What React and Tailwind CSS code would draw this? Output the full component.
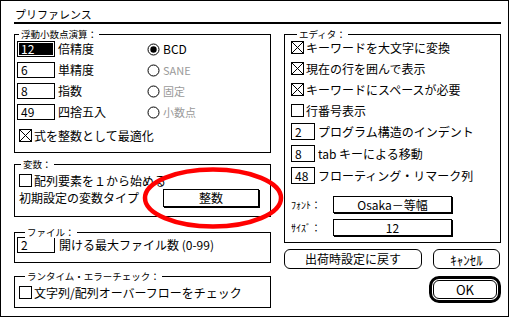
import React from "react";

const Check = ({ on }) => (
  <svg width="13" height="13" viewBox="0 0 13 13" className="block shrink-0">
    <rect x="0.5" y="0.5" width="12" height="12" fill="#fff" stroke="#000" shapeRendering="crispEdges" />
    {on && <path d="M1 1L12 12M12 1L1 12" stroke="#000" strokeWidth="1" />}
  </svg>
);

const Radio = ({ on }) => (
  <svg width="13" height="13" viewBox="0 0 13 13" className="block shrink-0">
    <circle cx="6.5" cy="6.5" r="5.5" fill="#fff" stroke="#000" />
    {on && <circle cx="6.5" cy="6.5" r="3.2" fill="#000" />}
  </svg>
);

const Group = ({ label, labelLeft, className, children }) => (
  <div className={`relative border border-black ${className}`}>
    <span className={`absolute top-[-6px] ${labelLeft} bg-white px-[2px] text-[9.5px] leading-[11px] whitespace-nowrap`}>
      {label}
    </span>
    {children}
  </div>
);

const Field = ({ children, wide = true }) => (
  <div
    className={`${wide ? "w-[38px] h-[16px]" : "w-[24px] h-[17px]"} border border-black flex items-center pl-[3px] text-[12px] leading-none shrink-0`}
  >
    {children}
  </div>
);

const leftRows = [
  { n: "6", label: "単精度", opt: "SANE", on: false, dim: true },
  { n: "8", label: "指数", opt: "固定", on: false, dim: true },
  { n: "49", label: "四捨五入", opt: "小数点", on: false, dim: true },
];

const checks = [
  { on: true, t: "キーワードを大文字に変換" },
  { on: true, t: "現在の行を囲んで表示" },
  { on: true, t: "キーワードにスペースが必要" },
  { on: false, t: "行番号表示" },
];

const fields = [
  { n: "2", t: "プログラム構造のインデント" },
  { n: "8", t: "tab キーによる移動" },
  { n: "48", t: "フローティング・リマーク列" },
];

export default function App() {
  return (
    <div className="w-[509px] h-[317px] border border-black bg-white relative overflow-hidden text-black leading-none font-['Noto_Sans_CJK_JP','Noto_Sans',sans-serif]">
      <div className="pl-[13px] pr-[7px] pt-[6px]">
        <div className="h-[14px] pl-[1px] text-[11px] leading-[14px]">プリファレンス</div>
        <div className="h-[2px] bg-black mt-[1px]" />
        <div className="flex gap-[13px] mt-[10px]">
          {/* left column */}
          <div className="w-[257px] flex flex-col">
            <Group label="浮動小数点演算：" labelLeft="left-[4px]" className="h-[119px] pt-[6px] pl-[2px]">
              <div className="flex flex-col gap-[5px]">
                <div className="flex items-center h-[16px]">
                  <div className="w-[38px] h-[16px] border border-black p-[1px] shrink-0">
                    <div className="h-full bg-black text-white text-[12px] leading-[12px] pl-[2px]">12</div>
                  </div>
                  <span className="ml-[3px] w-[89px] text-[12px]">倍精度</span>
                  <Radio on />
                  <span className="ml-[3px] text-[12px]">BCD</span>
                </div>
                {leftRows.map((r) => (
                  <div key={r.n} className="flex items-center h-[16px]">
                    <Field>{r.n}</Field>
                    <span className="ml-[3px] w-[89px] text-[12px]">{r.label}</span>
                    <Radio on={r.on} />
                    <span className="ml-[3px] text-[11px] text-[#9a9a9a]">{r.opt}</span>
                  </div>
                ))}
                <div className="flex items-center h-[13px] mt-[4px] ml-[2px]">
                  <Check on />
                  <span className="ml-[2px] text-[12px]">式を整数として最適化</span>
                </div>
              </div>
            </Group>

            <Group label="変数：" labelLeft="left-[6px]" className="mt-[11px] h-[53px] pt-[9px] pl-[4px]">
              <div className="flex items-center h-[13px]">
                <Check />
                <span className="ml-[2px] text-[12px]">配列要素を１から始める</span>
              </div>
              <div className="flex items-center mt-[2px] h-[18px]">
                <span className="w-[144px] text-[12px]">初期設定の変数タイプ：</span>
                <div className="w-[96px] h-[18px] border border-black shadow-[1px_1px_0_0_#000] flex items-center justify-center text-[12px]">
                  整数
                </div>
              </div>
            </Group>

            <Group label="ファイル：" labelLeft="left-[10px]" className="mt-[15px] h-[31px] pt-[4px] pl-[2px]">
              <div className="flex items-center h-[16px]">
                <Field>2</Field>
                <span className="ml-[4px] text-[12px]">開ける最大ファイル数 (0-99)</span>
              </div>
            </Group>

            <Group label="ランタイム・エラーチェック：" labelLeft="left-[10px]" className="mt-[13px] h-[32px] pt-[9px] pl-[4px]">
              <div className="flex items-center h-[13px]">
                <Check />
                <span className="ml-[2px] text-[12px]">文字列/配列オーバーフローをチェック</span>
              </div>
            </Group>
          </div>

          {/* right column */}
          <div className="w-[217px] flex flex-col">
            <Group label="エディタ：" labelLeft="left-[12px]" className="h-[209px] pt-[6px] pl-[6px]">
              <div className="flex flex-col gap-[8px]">
                {checks.map((c) => (
                  <div key={c.t} className="flex items-center h-[13px]">
                    <Check on={c.on} />
                    <span className="ml-[2px] text-[12px]">{c.t}</span>
                  </div>
                ))}
              </div>
              <div className="flex flex-col gap-[5px] mt-[6px]">
                {fields.map((f) => (
                  <div key={f.t} className="flex items-center h-[17px]">
                    <Field wide={false}>{f.n}</Field>
                    <span className="ml-[3px] text-[12px]">{f.t}</span>
                  </div>
                ))}
              </div>
              <div className="flex flex-col gap-[6px] mt-[12px]">
                <div className="flex items-center h-[17px]">
                  <span className="w-[42px] text-[10px]">ﾌｫﾝﾄ：</span>
                  <div className="w-[119px] h-[17px] border border-black shadow-[1px_1px_0_0_#000] flex items-center justify-center text-[12px]">
                    Osaka－等幅
                  </div>
                </div>
                <div className="flex items-center h-[17px]">
                  <span className="w-[42px] text-[10px]">ｻｲｽﾞ：</span>
                  <div className="w-[119px] h-[17px] border border-black shadow-[1px_1px_0_0_#000] flex items-center justify-center text-[12px]">
                    12
                  </div>
                </div>
              </div>
            </Group>

            <div className="flex gap-[11px] mt-[6px] h-[20px]">
              <div className="w-[138px] h-[20px] border border-black rounded-[6px] flex items-center justify-center text-[12px]">
                出荷時設定に戻す
              </div>
              <div className="w-[67px] h-[20px] border border-black rounded-[6px] flex items-center justify-center text-[13px]">
                ｷｬﾝｾﾙ
              </div>
            </div>

            <div className="self-end mt-[7px] w-[72px] h-[27px] border-[3px] border-black rounded-[10px] p-[1px]">
              <div className="h-full border border-black rounded-[6px] flex items-center justify-center text-[13px]">
                OK
              </div>
            </div>
          </div>
        </div>
      </div>

      <svg
        className="absolute left-[141px] top-[165px] pointer-events-none"
        width="142"
        height="64"
        viewBox="0 0 142 64"
      >
        <ellipse cx="71" cy="32" rx="68" ry="28.5" fill="none" stroke="#f00" strokeWidth="4.5" />
      </svg>
    </div>
  );
}
